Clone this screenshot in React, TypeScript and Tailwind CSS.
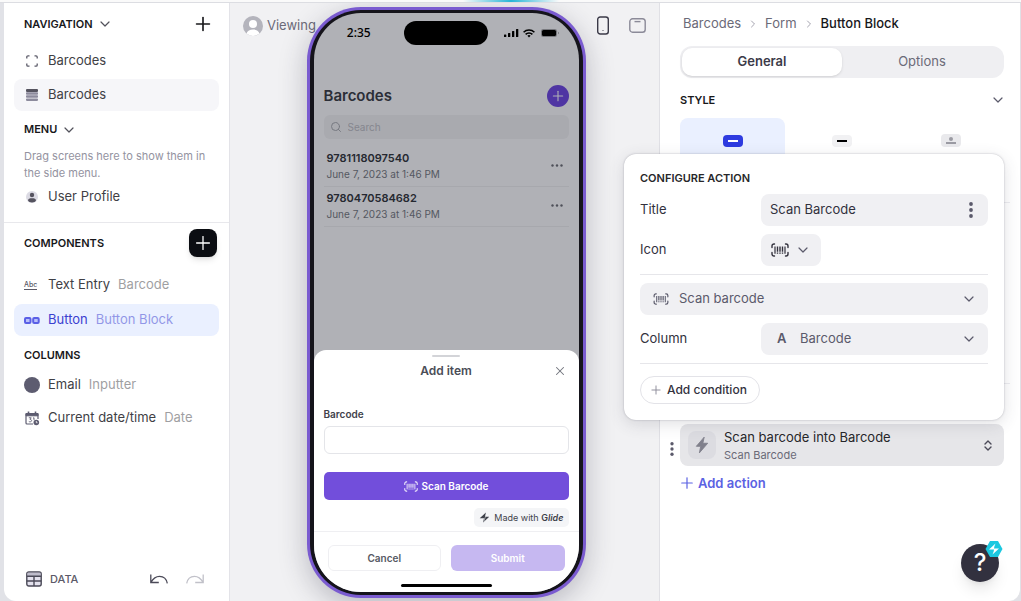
import type { ReactNode } from "react";
import { ChevronDown, ChevronRight, Plus, Search, X } from "lucide-react";

function BarcodeIcon({ className }: { className?: string }) {
  return (
    <svg className={className} viewBox="0 0 18 14" fill="none" stroke="currentColor">
      <path d="M3.500 1H3a2 2 0 0 0-2 2v1.500M14.500 1h.5a2 2 0 0 1 2 2v1.500M3.500 13H3a2 2 0 0 1-2-2V9.500M14.500 13h.5a2 2 0 0 0 2-2V9.500" strokeWidth="1.400" strokeLinecap="round" />
      <path d="M4 3.500v7.200M14 3.500v7.200" strokeWidth="1.200" />
      <path d="M6.500 3.500v5.200M9 3.500v5.200M11.500 3.500v5.200M6.500 9.500v1.200M9 9.500v1.200M11.500 9.500v1.200" strokeWidth="1.400" />
    </svg>
  );
}

function BoltIcon({ className }: { className?: string }) {
  return (
    <svg className={className} viewBox="0 0 16 20" fill="currentColor">
      <path d="M10.500 1 1.500 11.500h5L5 19l9.500-11H9z" strokeLinejoin="round" stroke="currentColor" />
    </svg>
  );
}

function GlideMark({ className }: { className?: string }) {
  return (
    <svg className={className} viewBox="0 0 12 12" fill="currentColor">
      <path d="M7.500.5.8 6.800h5.400zM4.500 11.500l6.700-6.300H5.800zM6.900.5 5.900 5.600l1.300.2-2.100 5.700 1-5z" />
    </svg>
  );
}

function Kebab({ className }: { className?: string }) {
  return (
    <svg className={className} viewBox="0 0 4 16" fill="currentColor">
      <circle cx="2" cy="2" r="1.900" />
      <circle cx="2" cy="8" r="1.900" />
      <circle cx="2" cy="14" r="1.900" />
    </svg>
  );
}

function SectionTitle({ children }: { children: ReactNode }) {
  return <h2 className="text-[11px] font-semibold text-[#18181b]">{children}</h2>;
}

type RowProps = {
  icon: ReactNode;
  label: string;
  detail?: string;
  className?: string;
};

function SidebarRow({ icon, label, detail, className = "h-8 text-[#3f3f46]" }: RowProps) {
  return (
    <li>
      <a href="#" className={`flex items-center rounded-lg pl-[10px] text-[13px] whitespace-nowrap ${className}`}>
        <span className="flex w-6 items-center">{icon}</span>
        <span>{label}</span>
        {detail && <span className="ml-2 opacity-50">{detail}</span>}
      </a>
    </li>
  );
}

function Sidebar() {
  return (
    <aside className="flex w-[226px] shrink-0 flex-col rounded-bl-xl border-r border-[#e3e3e8] bg-white">
      <div className="flex h-[42px] items-center pr-[15px] pl-5">
        <SectionTitle>NAVIGATION</SectionTitle>
        <ChevronDown className="ml-1 size-4 text-[#52525b]" strokeWidth={1.8} />
        <button aria-label="Add screen" className="ml-auto text-[#18181b]">
          <Plus className="size-[22px]" strokeWidth={1.8} />
        </button>
      </div>
      <ul className="flex flex-col gap-0.5 px-[10px]">
        <SidebarRow
          label="Barcodes"
          icon={
            <svg className="ml-0.5 size-3" viewBox="0 0 12 12" fill="none" stroke="#5b5a68" strokeWidth="1.300">
              <path d="M.8 3.500V2A1.200 1.200 0 0 1 2 .8h1.500M8.500.8H10A1.200 1.200 0 0 1 11.200 2v1.500M11.200 8.500V10a1.200 1.200 0 0 1-1.200 1.200H8.500M3.500 11.200H2A1.200 1.200 0 0 1 .8 10V8.500" />
            </svg>
          }
        />
        <SidebarRow
          label="Barcodes"
          className="h-8 bg-[#f6f6f9] text-[#3f3f46]"
          icon={
            <svg className="ml-0.5 size-3" viewBox="0 0 12 12" fill="#8d8b9d">
              <rect width="12" height="3" rx="1" fill="#55535f" />
              <rect y="3.200" width="12" height="2.500" rx=".8" />
              <rect y="6.300" width="12" height="2.500" rx=".8" />
              <rect y="9.400" width="12" height="2.500" rx=".8" />
            </svg>
          }
        />
      </ul>
      <div className="flex h-[37px] items-center pl-5">
        <SectionTitle>MENU</SectionTitle>
        <ChevronDown className="ml-1 size-4 text-[#52525b]" strokeWidth={1.8} />
      </div>
      <p className="px-5 text-[11px] leading-[17px] text-[#94939f]">Drag screens here to show them in the side menu.</p>
      <ul className="px-[10px] pb-[10px]">
        <SidebarRow
          label="User Profile"
          className="h-[30px] text-[#3f3f46]"
          icon={
            <svg className="ml-0.5 size-3" viewBox="0 0 12 12">
              <circle cx="6" cy="6" r="6" fill="#dcdbe4" />
              <circle cx="6" cy="4" r="2.200" fill="#55535f" />
              <path d="M2 9.500C2 7.800 3.500 7.200 6 7.200s4 .6 4 2.300C9.500 10.800 8 11.500 6 11.500S2.500 10.800 2 9.500z" fill="#55535f" />
            </svg>
          }
        />
      </ul>

      <div className="flex h-[41px] items-center justify-between border-t border-[#e8e8ec] pr-3 pl-5">
        <SectionTitle>COMPONENTS</SectionTitle>
        <button aria-label="Add component" className="flex size-7 items-center justify-center rounded-lg bg-[#0b0d12] text-white shadow-md">
          <Plus className="size-[22px]" strokeWidth={1.4} />
        </button>
      </div>
      <ul className="flex flex-col gap-[3px] px-[10px] pt-1.5">
        <SidebarRow
          label="Text Entry"
          detail="Barcode"
          icon={<span className="border-b border-[#5b5a68] text-[7px] leading-[9px] font-medium text-[#5b5a68]">Abc</span>}
        />
        <SidebarRow
          label="Button"
          detail="Button Block"
          className="h-8 bg-[#eaf0ff] text-[#3a3fd0]"
          icon={
            <svg className="h-[7px] w-4" viewBox="0 0 16 7" fill="#b9c0fa" stroke="#5a5fe6" strokeWidth="2">
              <rect x="1" y="1" width="5.500" height="5" rx="1" />
              <rect x="9.200" y="1" width="5.500" height="5" rx="1" />
            </svg>
          }
        />
      </ul>
      <div className="flex h-[38px] items-center pl-5">
        <SectionTitle>COLUMNS</SectionTitle>
      </div>
      <ul className="flex flex-col gap-[11px] px-[10px]">
        <SidebarRow
          label="Email"
          detail="Inputter"
          className="h-[22px] text-[#3f3f46]"
          icon={<span className="size-4 rounded-full bg-[#5d5c70]" />}
        />
        <SidebarRow
          label="Current date/time"
          detail="Date"
          className="h-[22px] text-[#3f3f46]"
          icon={
            <svg className="h-[15px] w-4" viewBox="0 0 16 15" fill="none" stroke="#5d5c70">
              <path d="M14 8V3.500a1 1 0 0 0-1-1H3a1 1 0 0 0-1 1V12a1 1 0 0 0 1 1h6" strokeWidth="1.200" />
              <path d="M2 2.500h12v2.300H2z" fill="#5d5c70" />
              <path d="M4.500.5v2M11.500.5v2" strokeWidth="1.600" />
              <path d="M4.800 6.800h2.400L6 8.500c1.200 0 1.600.5 1.600 1.200 0 1-1.800 1.600-2.800.7M9 7.300l1-.6v2.500" strokeWidth=".9" />
              <circle cx="12.300" cy="11.500" r="2.800" fill="#5d5c70" stroke="none" />
              <path d="M12.300 10v1.700h1.200" stroke="#fff" strokeWidth=".8" />
            </svg>
          }
        />
      </ul>

      <div className="mt-auto flex h-11 items-center pr-[25px] pl-[22px] text-[#5b5a68]">
        <button className="flex items-center gap-2 text-[11px] font-medium">
          <svg className="size-4" viewBox="0 0 16 16" fill="#e4e2ee" stroke="#4b4a58" strokeWidth="1.400">
            <rect x=".8" y="1" width="14.400" height="14" rx="2" />
            <path d="M1.500 1.700h13V5h-13z" fill="#bebccb" stroke="none" />
            <path d="M.8 5.300h14.400M.8 10h14.400M8 5.300V15" />
          </svg>
          DATA
        </button>
        <button aria-label="Undo" className="ml-auto text-[#4b4a58]">
          <svg className="h-[10px] w-[18px]" viewBox="0 0 18 10" fill="none" stroke="currentColor" strokeWidth="1.300">
            <path d="M.8.5v8h8M1 8.200C3.500 3.800 6.500 2.300 9.500 2.300c4 0 7 2.700 7.800 7" />
          </svg>
        </button>
        <button aria-label="Redo" className="ml-[18px] text-[#c1c1c9]">
          <svg className="h-[10px] w-[18px]" viewBox="0 0 18 10" fill="none" stroke="currentColor" strokeWidth="1.300">
            <path d="M17.200.5v8h-8M17 8.200c-2.500-4.400-5.500-5.900-8.500-5.900-4 0-7 2.700-7.800 7" />
          </svg>
        </button>
      </div>
    </aside>
  );
}

const items = [
  { code: "9781118097540", date: "June 7, 2023 at 1:46 PM" },
  { code: "9780470584682", date: "June 7, 2023 at 1:46 PM" },
];

function StatusBar() {
  return (
    <div className="grid h-10 grid-cols-[1fr_84px_1fr] items-center text-black">
      <span className="text-center font-['Noto_Sans',sans-serif] text-xs font-medium">2:35</span>
      <span className="h-6 rounded-full bg-black" />
      <div className="flex items-center gap-1 pl-4">
        <svg className="h-2 w-[15px]" viewBox="0 0 15 8" fill="currentColor">
          <rect y="5.500" width="2.300" height="2.500" rx=".6" />
          <rect x="4" y="4" width="2.300" height="4" rx=".6" />
          <rect x="8" y="2" width="2.300" height="6" rx=".6" />
          <rect x="12" width="2.300" height="8" rx=".6" />
        </svg>
        <svg className="h-[9px] w-3" viewBox="0 0 12 9" fill="none" stroke="currentColor" strokeWidth="1.600">
          <path d="M.6 3.300a7.600 7.600 0 0 1 10.800 0M2.600 5.400a4.800 4.800 0 0 1 6.800 0" />
          <path d="m6 8.500 1.600-1.700a2.300 2.300 0 0 0-3.200 0z" fill="currentColor" stroke="none" />
        </svg>
        <svg className="ml-0.5 h-2 w-[18px]" viewBox="0 0 18 8">
          <rect width="16" height="8" rx="2.300" fill="#77787d" />
          <rect x="1" y="1" width="14" height="6" rx="1.500" />
          <path d="M17 2.800v2.400q1-.4 1-1.200t-1-1.200z" fill="#77787d" />
        </svg>
      </div>
    </div>
  );
}

function Phone() {
  return (
    <div className="z-10 h-[591px] rounded-[54px] bg-[#7a5bd0] p-[3px] shadow-[0_8px_28px_rgba(40,40,60,0.28)]">
      <div className="h-full rounded-[51px] bg-[#15141b] px-1 py-[3px]">
        <div className="flex h-full flex-col overflow-hidden rounded-[47px] bg-[#b0b1b6]">
          <StatusBar />
          <div className="flex-1 px-[10px] pt-8">
            <div className="flex items-center justify-between">
              <h1 className="text-[15px] leading-[22px] font-semibold text-[#2b2e37]">Barcodes</h1>
              <button aria-label="Add item" className="flex size-[22px] items-center justify-center rounded-full bg-[#4f35a3] text-[#b0b1b6]">
                <Plus className="size-4" strokeWidth={1.6} />
              </button>
            </div>
            <label className="mt-2 flex h-6 items-center gap-1.5 rounded-md bg-[#a9aaaf] px-1.5 text-[#777981]">
              <Search className="size-3 shrink-0" />
              <input
                aria-label="Search"
                placeholder="Search"
                className="w-full bg-transparent text-[10px] outline-none placeholder:text-[#85868e]"
              />
            </label>
            <ul className="mt-2">
              {items.map((item) => (
                <li key={item.code} className="flex h-10 items-center justify-between border-b border-[#a7a8ad] pr-1.5 pb-0.5 pl-[3px]">
                  <div>
                    <p className="text-[11px] leading-4 font-semibold text-[#252830]">{item.code}</p>
                    <p className="text-[10px] leading-4 text-[#555861]">{item.date}</p>
                  </div>
                  <button aria-label="More" className="text-[#4e5059]">
                    <svg className="h-[3px] w-3" viewBox="0 0 12 3" fill="currentColor">
                      <circle cx="1.500" cy="1.500" r="1.200" />
                      <circle cx="6" cy="1.500" r="1.200" />
                      <circle cx="10.500" cy="1.500" r="1.200" />
                    </svg>
                  </button>
                </li>
              ))}
            </ul>
          </div>

          <form className="rounded-t-xl bg-white pt-[5px]">
            <div className="mx-auto h-0.5 w-7 rounded-full bg-[#d3d4d8]" />
            <div className="mt-1 grid h-5 grid-cols-[1fr_auto_1fr] items-center px-3">
              <h2 className="col-start-2 text-xs font-semibold text-[#4a4d57]">Add item</h2>
              <button type="button" aria-label="Close" className="justify-self-end text-[#72747d]">
                <X className="size-[14px]" strokeWidth={1.8} />
              </button>
            </div>
            <div className="px-[10px]">
              <label htmlFor="barcode" className="mt-[25px] block text-[10px] leading-4 font-semibold text-[#3f424b]">
                Barcode
              </label>
              <input id="barcode" className="mt-1 block h-7 w-full rounded-md border border-[#e4e5e9] px-2 text-[11px] outline-none" />
              <button type="button" className="mt-[18px] flex h-7 w-full items-center justify-center gap-1 rounded-[5px] bg-[#724edb] text-[10px] font-semibold text-white">
                <BarcodeIcon className="h-[11px] w-[14px] opacity-90" />
                Scan Barcode
              </button>
              <a href="#" className="mt-2 ml-auto flex h-[19px] w-fit items-center gap-1 rounded-[5px] bg-[#f4f5f7] px-[5px] text-[9px] text-[#3f424b]">
                <GlideMark className="size-[11px]" />
                <span>
                  Made with <b className="font-semibold">G<i>lide</i></b>
                </span>
              </a>
            </div>
            <div className="mt-1 grid grid-cols-2 gap-[10px] border-t border-[#efeff2] px-[14px] pt-[13px] text-[10px] font-semibold">
              <button type="button" className="h-[26px] rounded-md border border-[#efeff2] text-[#565963]">Cancel</button>
              <button type="submit" className="h-[26px] rounded-md bg-[#c6b8f1] text-white">Submit</button>
            </div>
            <div className="mx-auto mt-[13px] mb-[5px] h-[3px] w-[91px] rounded-full bg-black" />
          </form>
        </div>
      </div>
    </div>
  );
}

function Preview() {
  return (
    <main className="grid min-w-0 flex-1 grid-cols-[minmax(0,1fr)_279px_minmax(0,1fr)] items-start overflow-hidden bg-[#f1f1f3] pt-1 pl-[3px]">
      <button className="mt-[9px] ml-[10px] flex items-center gap-1 text-[13px] whitespace-nowrap text-[#6b6a78]">
        <svg className="size-5 shrink-0" viewBox="0 0 20 20">
          <circle cx="10" cy="10" r="10" fill="#b4b4bc" />
          <circle cx="10" cy="8" r="4" fill="#fff" />
          <path d="M3.500 17.600C4.300 14.700 7 13.600 10 13.600s5.700 1.100 6.500 4A10 10 0 0 1 10 20a10 10 0 0 1-6.500-2.400z" fill="#fff" />
        </svg>
        Viewing
      </button>
      <Phone />
      <div className="z-10 mt-[9px] ml-[11px] flex items-center gap-5">
        <button aria-label="Phone preview" className="shrink-0 text-[#3b3a48]">
          <svg className="h-[19px] w-3" viewBox="0 0 12 19" fill="none" stroke="currentColor" strokeWidth="1.400">
            <rect x=".7" y="1" width="10.600" height="17" rx="2.500" />
            <circle cx="6" cy="14.500" r=".6" fill="currentColor" stroke="none" />
          </svg>
        </button>
        <button aria-label="Tablet preview" className="shrink-0 text-[#8b8a98]">
          <svg className="h-[15px] w-[17px]" viewBox="0 0 17 15" fill="none" stroke="currentColor" strokeWidth="1.400">
            <rect x=".8" y=".8" width="15.400" height="13.400" rx="2.800" />
            <path d="M5.500 3.600h6" />
          </svg>
        </button>
      </div>
    </main>
  );
}

function ConfigureAction() {
  return (
    <div className="absolute top-[151px] right-4 w-[380px] rounded-xl bg-white px-4 pt-[14px] pb-4 text-[13px] text-[#32313d] shadow-[0_0_2px_rgba(60,60,80,0.35),0_4px_16px_rgba(60,60,80,0.16)]">
      <h2 className="text-[11px] leading-5 font-semibold text-[#27272a]">CONFIGURE ACTION</h2>
      <div className="mt-1.5 flex items-center">
        <label htmlFor="title" className="w-[121px] shrink-0">Title</label>
        <div className="flex h-8 min-w-0 flex-1 items-center rounded-lg bg-[#f0f0f3] pr-[15px] pl-[9px]">
          <input id="title" defaultValue="Scan Barcode" className="min-w-0 flex-1 bg-transparent outline-none" />
          <button aria-label="Title options" className="text-[#5b5a6b]">
            <Kebab className="h-4 w-1" />
          </button>
        </div>
      </div>
      <div className="mt-2 flex items-center">
        <span id="icon-label" className="w-[121px] shrink-0">Icon</span>
        <button aria-labelledby="icon-label" className="flex h-8 w-[60px] items-center gap-1.5 rounded-lg bg-[#f0f0f3] pl-[10px]">
          <BarcodeIcon className="h-[14px] w-[18px]" />
          <ChevronDown className="size-4 text-[#5b5a6b]" strokeWidth={1.8} />
        </button>
      </div>
      <hr className="mt-2 border-[#e6e6ea]" />
      <div className="mt-2 flex h-8 items-center rounded-lg bg-[#f0f0f3] pr-[11px] pl-[13px] text-[#5b5a6b]">
        <BarcodeIcon className="h-3 w-4" />
        <select aria-label="Action" className="ml-[10px] min-w-0 flex-1 appearance-none bg-transparent outline-none">
          <option>Scan barcode</option>
        </select>
        <ChevronDown className="size-4" strokeWidth={1.8} />
      </div>
      <div className="mt-2 flex items-center">
        <label htmlFor="column" className="w-[121px] shrink-0">Column</label>
        <div className="flex h-8 min-w-0 flex-1 items-center rounded-lg bg-[#f0f0f3] pr-[11px] pl-4 text-[#5b5a6b]">
          <span className="w-[23px] font-semibold">A</span>
          <select id="column" className="min-w-0 flex-1 appearance-none bg-transparent outline-none">
            <option>Barcode</option>
          </select>
          <ChevronDown className="size-4" strokeWidth={1.8} />
        </div>
      </div>
      <hr className="mt-2 border-[#e6e6ea]" />
      <button className="mt-3 flex h-7 items-center gap-1 rounded-full border border-[#e3e3e8] pr-3 pl-2 text-xs font-medium">
        <Plus className="size-[14px] text-[#8b8a98]" strokeWidth={1.6} />
        Add condition
      </button>
    </div>
  );
}

function Inspector() {
  return (
    <aside className="relative z-20 flex w-[362px] shrink-0 flex-col rounded-br-xl border-x border-[#e0e0e5] bg-white">
      <nav className="flex h-[42px] items-center pl-[23px] text-[13px] text-[#6b6a78]">
        <a href="#">Barcodes</a>
        <ChevronRight className="mx-1.5 size-3 text-[#a5a4b0]" />
        <a href="#">Form</a>
        <ChevronRight className="mx-1.5 size-3 text-[#a5a4b0]" />
        <span className="font-medium text-[#18181b]">Button Block</span>
      </nav>
      <div className="mx-[10px] border-b border-[#ececf0] px-[10px] pr-1.5 pb-3">
        <div className="mt-px flex h-8 rounded-xl bg-[#efeff2] p-0.5 text-[13px]">
          <button className="flex-1 rounded-[10px] bg-white font-semibold text-[#3b3a48] shadow-sm">General</button>
          <button className="flex-1 text-[#6b6a78]">Options</button>
        </div>
        <div className="flex h-10 items-center justify-between pt-1">
          <SectionTitle>STYLE</SectionTitle>
          <ChevronDown className="-mr-0.5 size-4 text-[#5b5a6b]" strokeWidth={1.8} />
        </div>
        <div className="grid grid-cols-3 gap-1">
          <button aria-label="Filled" className="flex h-[72px] justify-center rounded-lg bg-[#eaf0ff] pt-[17px]">
            <span className="flex h-3 w-5 items-center justify-center rounded bg-[#2e3be0]">
              <span className="h-0.5 w-[10px] bg-white" />
            </span>
          </button>
          <button aria-label="Bordered" className="flex h-[72px] justify-center rounded-lg pt-[17px]">
            <span className="flex h-3 w-5 items-center justify-center rounded bg-[#f1f1f3]">
              <span className="h-0.5 w-[10px] bg-black" />
            </span>
          </button>
          <button aria-label="Icon above" className="flex h-[72px] justify-center rounded-lg pt-4">
            <span className="flex h-[13px] w-5 flex-col items-center justify-center gap-px rounded bg-[#e9e9ec]">
              <span className="size-1 rounded-full bg-[#9b9ba3]" />
              <span className="h-0.5 w-[10px] bg-[#9b9ba3]" />
            </span>
          </button>
        </div>
      </div>
      <div className="mx-[10px] h-[181px] border-b border-[#ececf0]" />

      <div className="flex items-center pt-10 pr-4 pl-[10px]">
        <button aria-label="Action options" className="flex w-[10px] pt-2 text-[#5b5a6b]">
          <Kebab className="h-[14px] w-1" />
        </button>
        <button className="flex h-[42px] flex-1 items-center rounded-lg bg-[#e6e6e9] pr-[10px] pl-2 text-left">
          <span className="flex size-7 items-center justify-center rounded-lg bg-[#dcdce1] text-[#80808c]">
            <BoltIcon className="h-[18px] w-[14px]" />
          </span>
          <span className="ml-2 flex-1">
            <span className="block text-[13px] leading-5 text-[#27272a]">Scan barcode into Barcode</span>
            <span className="block text-[11px] leading-4 text-[#6b6a78]">Scan Barcode</span>
          </span>
          <svg className="h-[11px] w-3" viewBox="0 0 12 11" fill="none" stroke="#4b4a58" strokeWidth="1.400" strokeLinecap="round" strokeLinejoin="round">
            <path d="M3 4l3-3 3 3M3 7l3 3 3-3" />
          </svg>
        </button>
      </div>
      <button className="mt-[7px] ml-[18px] flex w-fit items-center gap-0.5 text-[13px] leading-5 font-semibold text-[#5b62e3]">
        <Plus className="size-[18px]" strokeWidth={1.6} />
        Add action
      </button>

      <ConfigureAction />

      <button aria-label="Help" className="absolute right-[21px] bottom-[19px] flex size-[38px] items-center justify-center rounded-full bg-[#32313f] text-2xl font-medium text-white shadow-lg">
        ?
        <svg className="absolute -top-1 -right-1 size-[18px]" viewBox="0 0 18 18">
          <path d="M5 1h8l4.500 8-4.500 8H5L.5 9z" fill="#1cc8e0" />
          <path d="M10.500 3.500 4 9.500h4.200zM7.500 14.500l6.500-6H9.800zM9.800 4 8 9.500h1L8.200 14l1.900-5.500H9z" fill="#fff" />
        </svg>
      </button>
    </aside>
  );
}

export default function App() {
  return (
    <div className="flex min-h-screen flex-col bg-[#e1e2e7] font-['Inter',sans-serif]">
      <div className="flex h-[3px] justify-center border-b border-[#dcdde2] bg-[#fafafa]">
        <div className="h-0.5 w-24 bg-linear-to-r from-transparent via-[#27b5d6] to-transparent" />
      </div>
      <div className="flex flex-1 pl-1">
        <Sidebar />
        <Preview />
        <Inspector />
      </div>
    </div>
  );
}
